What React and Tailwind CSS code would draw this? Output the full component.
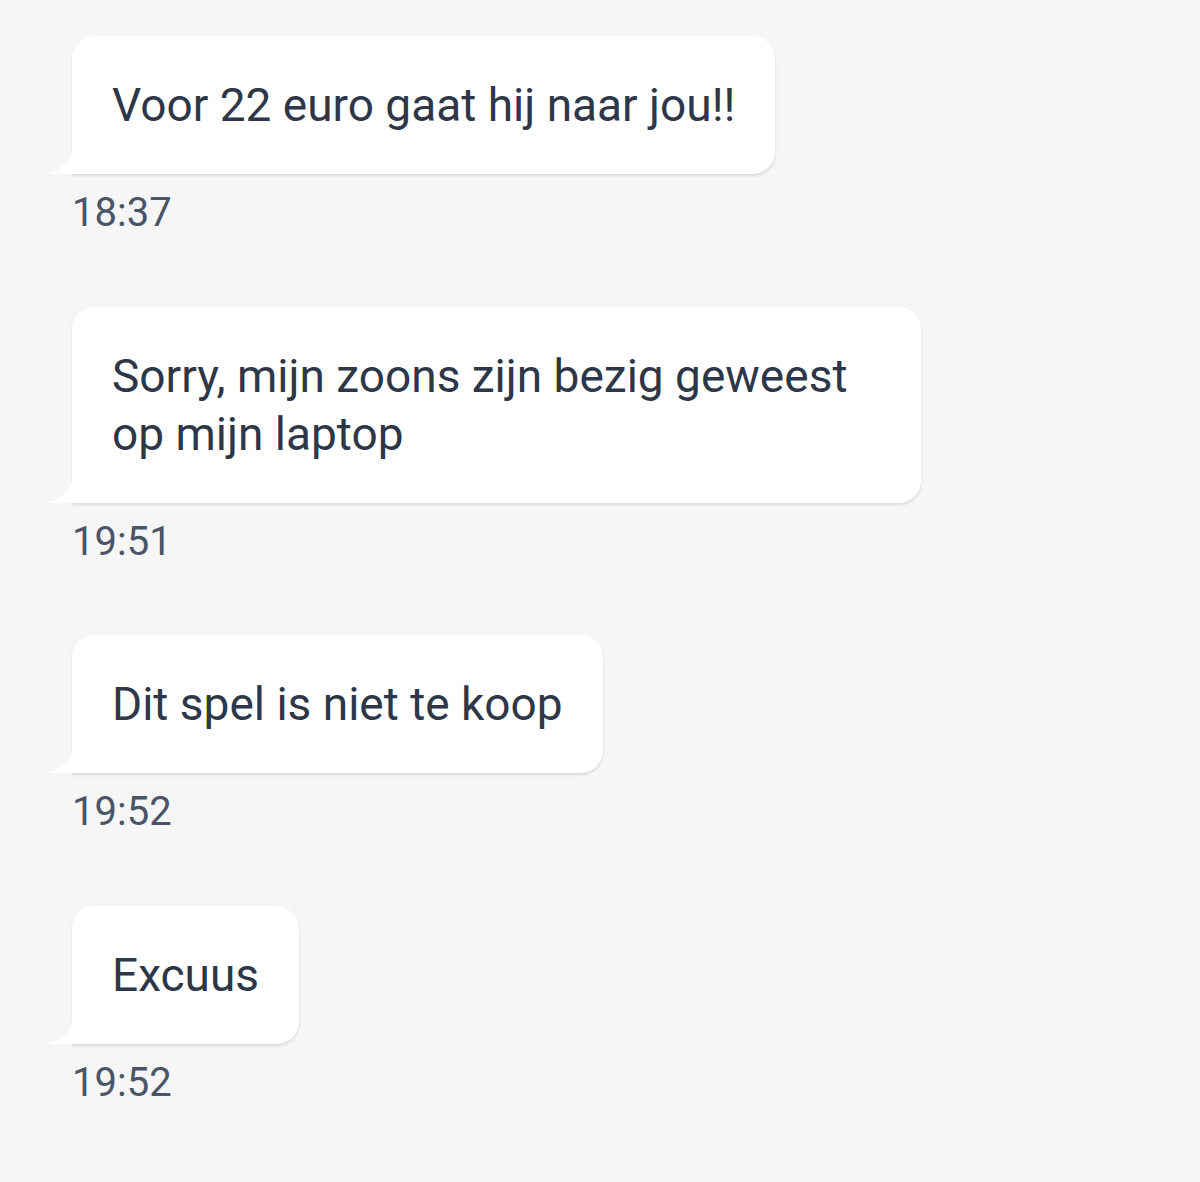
const messages = [
  { text: "Voor 22 euro gaat hij naar jou!!", time: "18:37" },
  { text: "Sorry, mijn zoons zijn bezig geweest op mijn laptop", time: "19:51" },
  { text: "Dit spel is niet te koop", time: "19:52" },
  { text: "Excuus", time: "19:52" },
];

function Bubble({ text }) {
  return (
    <div className="relative self-start max-w-[849px] bg-white rounded-[22px] rounded-bl-none px-10 py-10 shadow-[0_2px_3px_rgba(0,0,0,0.12)]">
      {/* tail */}
      <svg
        className="absolute -left-[26px] bottom-0"
        width="27"
        height="30"
        viewBox="0 0 27 30"
      >
        <path d="M27 0 C26 16 18 26 0 29 L0 30 L27 30 Z" fill="#ffffff" />
      </svg>
      <p className="text-[46px] leading-[58px] text-[#2d3748]">{text}</p>
    </div>
  );
}

export default function App() {
  return (
    <div
      className="min-h-[1182px] w-[1200px] bg-[#f6f6f6] pt-9 pl-[72px]"
      style={{ fontFamily: "Roboto, 'Noto Sans', sans-serif" }}
    >
      <div className="flex flex-col">
        {messages.map((m, i) => (
          <div key={i} className="flex flex-col mb-[73.5px]">
            <Bubble text={m.text} />
            <span className="mt-[19px] text-[40px] leading-[40px] text-[#4a5568]">
              {m.time}
            </span>
          </div>
        ))}
      </div>
    </div>
  );
}
